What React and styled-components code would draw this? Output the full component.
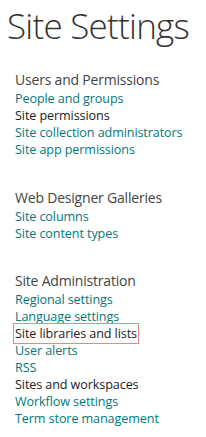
import React from "react";
import styled, { createGlobalStyle } from "styled-components";

const GlobalStyle = createGlobalStyle`
  body {
    margin: 0;
    background: #ffffff;
    font-family: "Open Sans", "Noto Sans", sans-serif;
  }
`;

const Page = styled.div`
  display: flex;
  flex-direction: column;
  padding: 0 0 20px 0;
`;

const Title = styled.h1`
  margin: 0;
  padding: 6px 0 0 7px;
  font-size: 35px;
  line-height: 40px;
  font-weight: 300;
  color: #333333;
  letter-spacing: -0.75px;
`;

const Section = styled.section`
  display: flex;
  flex-direction: column;
  padding-left: 15px;
  margin-top: ${(p) => p.$top}px;
`;

const Heading = styled.h2`
  margin: 0 0 1px 0;
  font-size: 14px;
  line-height: 18px;
  font-weight: 400;
  color: #444444;
  letter-spacing: -0.2px;
`;

const Item = styled.a`
  align-self: flex-start;
  font-size: 12.6px;
  line-height: 17px;
  text-decoration: none;
  color: ${(p) => (p.$dark ? "#222222" : "#03787c")};
  letter-spacing: -0.1px;
  outline: ${(p) => (p.$marked ? "1.5px solid #ea8585" : "none")};
  outline-offset: 1px;
`;

const sections = [
  {
    title: "Users and Permissions",
    top: 25,
    items: [
      { label: "People and groups" },
      { label: "Site permissions", dark: true },
      { label: "Site collection administrators" },
      { label: "Site app permissions" },
    ],
  },
  {
    title: "Web Designer Galleries",
    top: 31,
    items: [{ label: "Site columns" }, { label: "Site content types" }],
  },
  {
    title: "Site Administration",
    top: 30,
    items: [
      { label: "Regional settings" },
      { label: "Language settings" },
      { label: "Site libraries and lists", dark: true, marked: true },
      { label: "User alerts" },
      { label: "RSS" },
      { label: "Sites and workspaces", dark: true },
      { label: "Workflow settings" },
      { label: "Term store management" },
    ],
  },
];

export default function App() {
  return (
    <>
      <GlobalStyle />
      <Page>
        <Title>Site Settings</Title>
        {sections.map((s) => (
          <Section key={s.title} $top={s.top}>
            <Heading>{s.title}</Heading>
            {s.items.map((it) => (
              <Item key={it.label} href="#" $dark={it.dark} $marked={it.marked}>
                {it.label}
              </Item>
            ))}
          </Section>
        ))}
      </Page>
    </>
  );
}
